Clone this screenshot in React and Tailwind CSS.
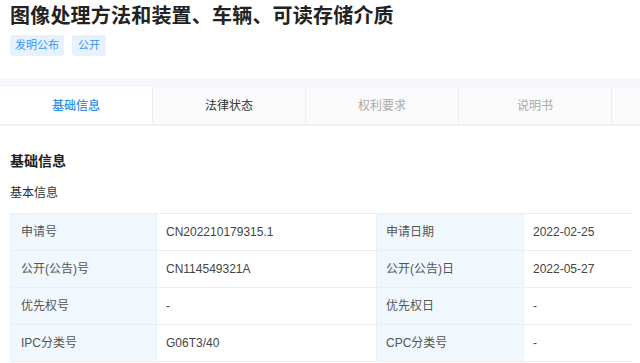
const rows = [
    ['申请号', 'CN202210179315.1', '申请日期', '2022-02-25'],
    ['公开(公告)号', 'CN114549321A', '公开(公告)日', '2022-05-27'],
    ['优先权号', '-', '优先权日', '-'],
    ['IPC分类号', 'G06T3/40', 'CPC分类号', '-'],
];

const tabs = [
    { label: '基础信息', cls: 'bg-white text-[#2f8ef0] font-medium' },
    { label: '法律状态', cls: 'bg-[#fafafa] text-[#333333]' },
    { label: '权利要求', cls: 'bg-[#fafafa] text-[#aaaaaa]' },
    { label: '说明书', cls: 'bg-[#fafafa] text-[#aaaaaa]' },
];

export default function App() {
    return (
        <div className="w-[640px] h-[363px] overflow-hidden bg-white" style={{ fontFamily: '"Liberation Sans", "Noto Sans CJK SC", sans-serif' }}>
            {/* Title and tags */}
            <div className="px-[10px] pt-[3px]">
                <h1 className="text-[20px] leading-[26px] font-bold text-[#222222] tracking-[0.2px]">
                    图像处理方法和装置、车辆、可读存储介质
                </h1>
                <div className="flex gap-[8px] mt-[6px]">
                    <span className="h-[21px] px-[5px] flex items-center rounded-[2px] bg-[#e6f3ff] text-[#3a93f0] text-[11px]">发明公布</span>
                    <span className="h-[21px] px-[6px] flex items-center rounded-[2px] bg-[#e6f3ff] text-[#3a93f0] text-[11px]">公开</span>
                </div>
            </div>

            {/* Tabs */}
            <div className="mt-[22px] bg-[#f5f7fb] pt-[9px]">
                <div className="flex border-b-[2px] border-[#f0f1f3]">
                    {tabs.map((t, i) => (
                        <div key={i} className={`w-[153px] shrink-0 h-[37px] flex items-center justify-center text-[12px] border-r border-[#efefef] ${t.cls}`}>
                            {t.label}
                        </div>
                    ))}
                    <div className="flex-1 bg-[#fafafa]" />
                </div>
            </div>

            {/* Section */}
            <div className="px-[10px]">
                <div className="mt-[25px] text-[14px] leading-[20px] font-bold text-[#222222]">基础信息</div>
                <div className="mt-[13px] text-[12px] leading-[18px] text-[#333333]">基本信息</div>
                <div className="mt-[11px] w-[622px] border-t border-l border-[#e8f0f7]">
                    {rows.map((r, i) => (
                        <div key={i} className="flex h-[37px] border-b border-[#e8f0f7] text-[12px]">
                            <div className="w-[146px] shrink-0 bg-[#f1f8fd] border-r border-[#e8f0f7] flex items-center pl-[10px] text-[#555555]">{r[0]}</div>
                            <div className="w-[220px] shrink-0 border-r border-[#e8f0f7] flex items-center pl-[9px] text-[#444444]">{r[1]}</div>
                            <div className="w-[147px] shrink-0 bg-[#f1f8fd] border-r border-[#e8f0f7] flex items-center pl-[9px] text-[#555555]">{r[2]}</div>
                            <div className="flex-1 flex items-center pl-[9px] text-[#444444]">{r[3]}</div>
                        </div>
                    ))}
                </div>
            </div>
        </div>
    );
}
